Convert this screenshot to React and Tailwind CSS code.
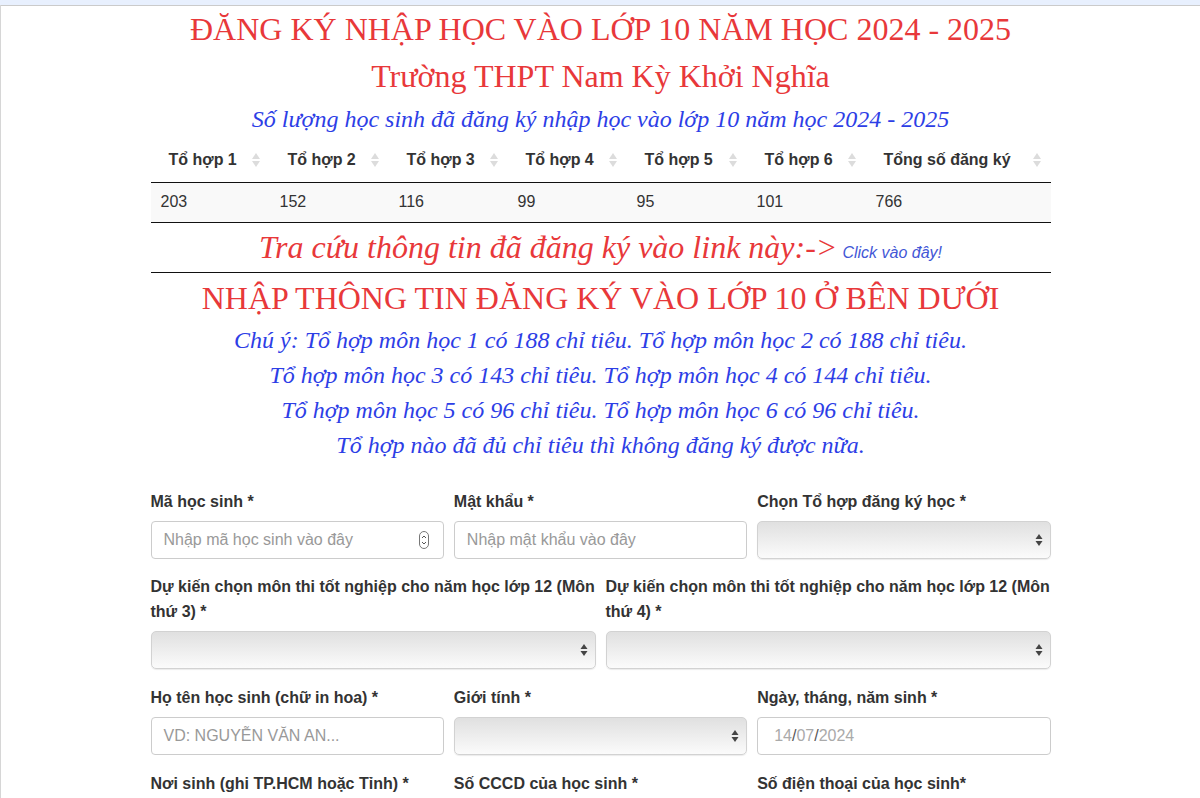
import React from 'react';

const serif = { fontFamily: '"Liberation Serif", "Times New Roman", serif' };
const sans = { fontFamily: '"Liberation Sans", Arial, sans-serif' };

const COLUMNS = [
  { label: 'Tổ hợp 1', w: 'w-[119px]' },
  { label: 'Tổ hợp 2', w: 'w-[119px]' },
  { label: 'Tổ hợp 3', w: 'w-[119px]' },
  { label: 'Tổ hợp 4', w: 'w-[119px]' },
  { label: 'Tổ hợp 5', w: 'w-[120px]' },
  { label: 'Tổ hợp 6', w: 'w-[119px]' },
  { label: 'Tổng số đăng ký', w: 'w-[185px]' },
];
const COUNTS = ['203', '152', '116', '99', '95', '101', '766'];

const NOTES = [
  'Chú ý: Tổ hợp môn học 1 có 188 chỉ tiêu. Tổ hợp môn học 2 có 188 chỉ tiêu.',
  'Tổ hợp môn học 3 có 143 chỉ tiêu. Tổ hợp môn học 4 có 144 chỉ tiêu.',
  'Tổ hợp môn học 5 có 96 chỉ tiêu. Tổ hợp môn học 6 có 96 chỉ tiêu.',
  'Tổ hợp nào đã đủ chỉ tiêu thì không đăng ký được nữa.',
];

function SortIcon() {
  return (
    <svg width="8" height="14" viewBox="0 0 8 14" className="absolute right-[10px] top-[14px]">
      <path d="M4 0 L8 6 H0 Z" fill="#dcdcdc" />
      <path d="M4 14 L8 8 H0 Z" fill="#dcdcdc" />
    </svg>
  );
}

function Label({ children }) {
  return <label className="block font-bold text-[16px] leading-[25px] text-[#333] mb-[7px]">{children}</label>;
}

function TextInput({ placeholder, spinner }) {
  return (
    <div className="relative h-[38px] border border-[#ccc] rounded-[4px] bg-white flex items-center px-[12px]">
      <span className="text-[16px] text-[#999]">{placeholder}</span>
      {spinner && (
        <svg width="10" height="18" viewBox="0 0 10 18" className="absolute right-[14px] top-[9px]">
          <rect x="0.5" y="0.5" width="9" height="17" rx="4.5" fill="none" stroke="#777" />
          <path d="M3 7 L5 5 L7 7" fill="none" stroke="#555" strokeWidth="1" />
          <path d="M3 11 L5 13 L7 11" fill="none" stroke="#555" strokeWidth="1" />
        </svg>
      )}
    </div>
  );
}

function SelectBox() {
  return (
    <div className="relative h-[38px] border border-[#d2d2d2] rounded-[5px] bg-gradient-to-b from-[#e0e0e0] to-[#fbfbfb] shadow-[0_1px_1px_rgba(0,0,0,0.08)]">
      <svg width="8" height="14" viewBox="0 0 8 14" className="absolute right-[7px] top-[11px]">
        <path d="M4 1 L7.5 6 H0.5 Z" fill="#444" />
        <path d="M4 13 L7.5 8 H0.5 Z" fill="#444" />
      </svg>
    </div>
  );
}

function DateInput() {
  return (
    <div className="h-[38px] border border-[#ccc] rounded-[4px] bg-white flex items-center px-[16px] text-[16px]">
      <span className="text-[#aaa]">14</span>
      <span className="text-[#555]">/</span>
      <span className="text-[#aaa]">07</span>
      <span className="text-[#555]">/</span>
      <span className="text-[#aaa]">2024</span>
    </div>
  );
}

export default function App() {
  return (
    <div className="min-h-screen bg-white" style={sans}>
      <div className="h-[6px] bg-[#e8f0fe] border-b border-[#cbcbcb]" />
      <div className="border-l border-[#d6d6d6] min-h-[792px]">
        <div className="w-[900px] mx-auto">
          <h1 className="text-center text-[#e8383a] text-[32px] leading-[48px] -mt-[1px]" style={serif}>
            ĐĂNG KÝ NHẬP HỌC VÀO LỚP 10 NĂM HỌC 2024 - 2025
          </h1>
          <h2 className="text-center text-[#e8383a] text-[32px] leading-[46px]" style={serif}>
            Trường THPT Nam Kỳ Khởi Nghĩa
          </h2>
          <p className="text-center italic text-[#2d3ee6] text-[24px] leading-[40px]" style={serif}>
            Số lượng học sinh đã đăng ký nhập học vào lớp 10 năm học 2024 - 2025
          </p>

          {/* Bảng thống kê */}
          <table className="w-full border-collapse text-[16px] text-[#333] table-fixed">
            <thead>
              <tr className="border-b border-[#111]">
                {COLUMNS.map((c) => (
                  <th key={c.label} className={`${c.w} relative h-[43px] pl-[18px] text-left font-bold`}>
                    {c.label}
                    <SortIcon />
                  </th>
                ))}
              </tr>
            </thead>
            <tbody>
              <tr className="bg-[#f9f9f9] border-b border-[#111]">
                {COUNTS.map((n, i) => (
                  <td key={i} className="h-[40px] pl-[10px]">{n}</td>
                ))}
              </tr>
            </tbody>
          </table>

          <div className="h-[50px] flex justify-center items-baseline pt-[8px] border-b border-[#111]">
            <span className="italic text-[#e8383a] text-[32px] leading-[32px]" style={serif}>
              Tra cứu thông tin đã đăng ký vào link này:-&gt;
            </span>
            <a className="italic text-[#4357d6] text-[16px] leading-[16px] ml-[5px]">Click vào đây!</a>
          </div>

          <h3 className="text-center text-[#e8383a] text-[32px] leading-[50px]" style={serif}>
            NHẬP THÔNG TIN ĐĂNG KÝ VÀO LỚP 10 Ở BÊN DƯỚI
          </h3>
          <div className="text-center italic text-[#2d3ee6] text-[24px] leading-[35px]" style={serif}>
            {NOTES.map((n) => (
              <p key={n}>{n}</p>
            ))}
          </div>

          {/* Form */}
          <form className="mt-[26px]">
            <div className="grid grid-cols-3 gap-x-[10px] mb-[15px]">
              <div>
                <Label>Mã học sinh *</Label>
                <TextInput placeholder="Nhập mã học sinh vào đây" spinner />
              </div>
              <div>
                <Label>Mật khẩu *</Label>
                <TextInput placeholder="Nhập mật khẩu vào đây" />
              </div>
              <div>
                <Label>Chọn Tổ hợp đăng ký học *</Label>
                <SelectBox />
              </div>
            </div>

            <div className="grid grid-cols-2 gap-x-[10px] mb-[16px]">
              <div>
                <Label>Dự kiến chọn môn thi tốt nghiệp cho năm học lớp 12 (Môn thứ 3) *</Label>
                <SelectBox />
              </div>
              <div>
                <Label>Dự kiến chọn môn thi tốt nghiệp cho năm học lớp 12 (Môn thứ 4) *</Label>
                <SelectBox />
              </div>
            </div>

            <div className="grid grid-cols-3 gap-x-[10px] mb-[16px]">
              <div>
                <Label>Họ tên học sinh (chữ in hoa) *</Label>
                <TextInput placeholder="VD: NGUYỄN VĂN AN..." />
              </div>
              <div>
                <Label>Giới tính *</Label>
                <SelectBox />
              </div>
              <div>
                <Label>Ngày, tháng, năm sinh *</Label>
                <DateInput />
              </div>
            </div>

            <div className="grid grid-cols-3 gap-x-[10px] mb-[16px]">
              <div>
                <Label>Nơi sinh (ghi TP.HCM hoặc Tỉnh) *</Label>
                <TextInput placeholder="" />
              </div>
              <div>
                <Label>Số CCCD của học sinh *</Label>
                <TextInput placeholder="" />
              </div>
              <div>
                <Label>Số điện thoại của học sinh*</Label>
                <TextInput placeholder="" />
              </div>
            </div>
          </form>
        </div>
      </div>
    </div>
  );
}
